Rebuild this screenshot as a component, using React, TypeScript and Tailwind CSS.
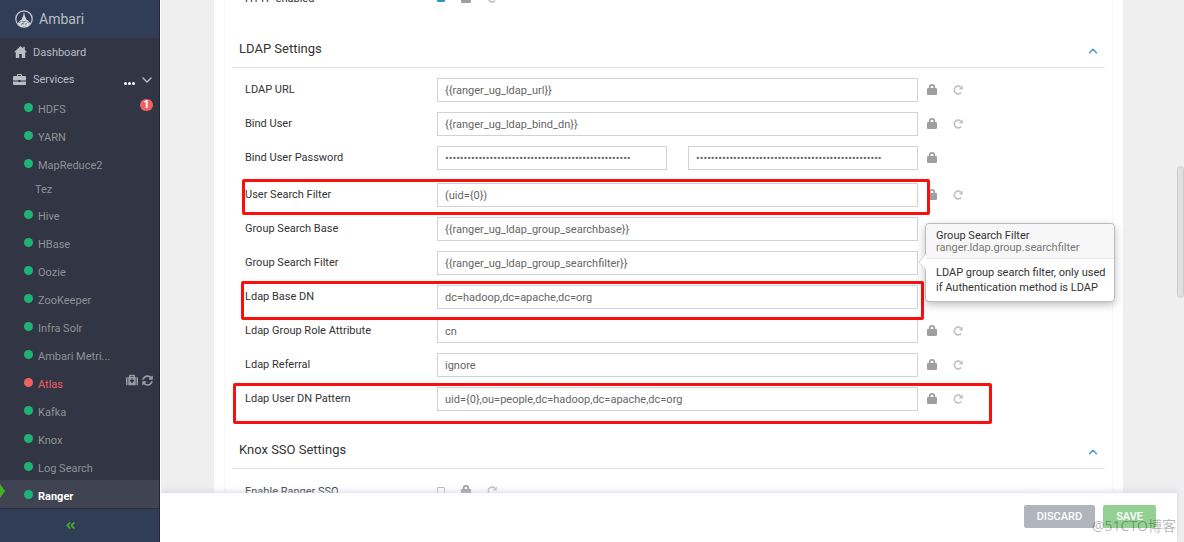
import { FaAngleDoubleLeft, FaMedkit, FaSyncAlt } from 'react-icons/fa';
import { ChevronDown, ChevronUp } from 'lucide-react';

type Status = 'ok' | 'down' | 'none';

interface Service {
  name: string;
  status: Status;
  alerts?: number;
  restart?: boolean;
  active?: boolean;
}

interface Property {
  id: string;
  label: string;
  value: string;
  secret?: boolean;
  mark?: string;
  changed?: boolean;
}

const SERVICES: Service[] = [
  { name: 'HDFS', status: 'ok', alerts: 1 },
  { name: 'YARN', status: 'ok' },
  { name: 'MapReduce2', status: 'ok' },
  { name: 'Tez', status: 'none' },
  { name: 'Hive', status: 'ok' },
  { name: 'HBase', status: 'ok' },
  { name: 'Oozie', status: 'ok' },
  { name: 'ZooKeeper', status: 'ok' },
  { name: 'Infra Solr', status: 'ok' },
  { name: 'Ambari Metri...', status: 'ok' },
  { name: 'Atlas', status: 'down', restart: true },
  { name: 'Kafka', status: 'ok' },
  { name: 'Knox', status: 'ok' },
  { name: 'Log Search', status: 'ok' },
  { name: 'Ranger', status: 'ok', active: true },
];

const SECRET = 'x'.repeat(50);

const PROPERTIES: Property[] = [
  { id: 'url', label: 'LDAP URL', value: '{{ranger_ug_ldap_url}}' },
  { id: 'bind-user', label: 'Bind User', value: '{{ranger_ug_ldap_bind_dn}}' },
  { id: 'bind-password', label: 'Bind User Password', value: SECRET, secret: true },
  {
    id: 'user-filter',
    label: 'User Search Filter',
    value: '(uid={0})',
    mark: '-left-[3px] right-[175px] h-9',
  },
  {
    id: 'group-base',
    label: 'Group Search Base',
    value: '{{ranger_ug_ldap_group_searchbase}}',
    changed: true,
  },
  { id: 'group-filter', label: 'Group Search Filter', value: '{{ranger_ug_ldap_group_searchfilter}}' },
  {
    id: 'base-dn',
    label: 'Ldap Base DN',
    value: 'dc=hadoop,dc=apache,dc=org',
    mark: '-left-1 right-[181px] h-[39px]',
  },
  { id: 'group-role', label: 'Ldap Group Role Attribute', value: 'cn' },
  { id: 'referral', label: 'Ldap Referral', value: 'ignore' },
  {
    id: 'dn-pattern',
    label: 'Ldap User DN Pattern',
    value: 'uid={0},ou=people,dc=hadoop,dc=apache,dc=org',
    mark: '-left-3 right-[113px] h-[41px]',
  },
];

function Logo() {
  return (
    <svg viewBox="0 0 18 18" className="size-[18px]" fill="none">
      <circle cx="9" cy="9" r="8.2" stroke="#c9ced6" strokeWidth="1.2" />
      <path
        d="M8.7 2.8h.6l.5 3.2.9 1.7.4 1.6 2.1 1.5 2.3 2.6-1.7 1.8-2.4 1.3H6.6l-2.4-1.3-1.7-1.8 2.3-2.6 2.1-1.5.4-1.6.9-1.7z"
        fill="#d3d7dd"
      />
      <path
        d="M4.2 13l1.6-1.6M6.6 14.8l.9-1.7 1.3.9M7.4 11.2l1.6.9 1.6-1M10.6 14.6l.8-1.5M12.4 11.6l1 1.2"
        stroke="#313d54"
        strokeWidth=".8"
      />
    </svg>
  );
}

function HomeIcon() {
  return (
    <svg viewBox="0 0 13 12" className="h-3 w-[13px]" fill="currentColor">
      <path d="M6.5 0L0 6.2h1.8V12h3.4V8h2.6v4h3.4V6.2H13L10.8 4V.8H9.2v1.7z" />
    </svg>
  );
}

function BriefcaseIcon() {
  return (
    <svg viewBox="0 0 13 12" className="h-3 w-[13px]" fill="currentColor">
      <path d="M4 2V1a1 1 0 011-1h3a1 1 0 011 1v1h3a1 1 0 011 1v3.6H7.6V6H5.4v.6H0V3a1 1 0 011-1zm1 0h3V1H5zM0 7.4h5.4V8h2.2v-.6H13V10a1 1 0 01-1 1H1a1 1 0 01-1-1z" />
    </svg>
  );
}

function LockIcon() {
  return (
    <svg viewBox="0 0 10 11" className="h-[11px] w-2.5" fill="currentColor">
      <path d="M1.8 4V3.2a3.2 3.2 0 016.4 0V4H9a1 1 0 011 1v5a1 1 0 01-1 1H1a1 1 0 01-1-1V5a1 1 0 011-1zm1.8 0h2.8V3.2a1.4 1.4 0 00-2.8 0z" />
    </svg>
  );
}

function RepeatIcon() {
  return (
    <svg viewBox="0 0 10 10" className="size-2.5" fill="none">
      <path d="M8.2 7.5A3.9 3.9 0 118 2.3" stroke="currentColor" strokeWidth="1.6" />
      <path d="M9.8.4v4.2H5.6z" fill="currentColor" />
    </svg>
  );
}

function PropertyActions({ override = true, changed = false }: { override?: boolean; changed?: boolean }) {
  return (
    <div className="flex items-center gap-4 pl-[9px]">
      <button type="button" aria-label="Final" className="pb-0.5 text-[#9f9f9f]">
        <LockIcon />
      </button>
      {override && (
        <button type="button" aria-label="Reset" className={changed ? 'text-[#3f9b6b]' : 'text-[#c2c2c2]'}>
          <RepeatIcon />
        </button>
      )}
    </div>
  );
}

function SectionHeader({ title }: { title: string }) {
  return (
    <div className="flex h-[37px] items-center justify-between border-b border-[#dddfe1] pr-[5px] pl-[7px]">
      <h2 className="text-[13px] text-[#333]">{title}</h2>
      <button type="button" aria-label={`Collapse ${title}`} className="pt-[3px] text-[#4a9cc9]">
        <ChevronUp size={14} strokeWidth={2.5} />
      </button>
    </div>
  );
}

function Popover() {
  return (
    <div
      role="tooltip"
      className="absolute -top-7 -right-2.5 z-20 w-[190px] rounded border border-[#bbb] bg-white shadow-[0_3px_8px_rgba(0,0,0,0.25)]"
    >
      <svg viewBox="0 0 8 16" className="absolute top-[30px] -left-2 h-4 w-2">
        <path d="M8 0L1 8l7 8" fill="#fff" stroke="#ccc" strokeWidth=".8" />
      </svg>
      <div className="rounded-t border-b border-[#e8e8e8] bg-[#f7f7f7] px-2.5 pt-1.5 pb-1 leading-3">
        <div className="text-[#333]">Group Search Filter</div>
        <div className="text-[#777]">ranger.ldap.group.searchfilter</div>
      </div>
      <p className="py-1.5 pr-1 pl-2.5 leading-[15px] text-[#333]">
        LDAP group search filter, only used if Authentication method is LDAP
      </p>
    </div>
  );
}

const FIELD =
  'h-6 w-full min-w-0 flex-1 border border-[#cfd3d8] bg-white px-[7px] text-[#666] outline-none focus:border-[#4a9cc9]';

function PropertyRow({ property }: { property: Property }) {
  const { id, label, value, secret, mark, changed } = property;
  return (
    <div className={`relative flex h-6 items-center ${secret ? 'mb-[13px]' : 'mb-2.5'}`}>
      <label htmlFor={id} className="w-48 shrink-0 pt-px text-[#333]">
        {label}
      </label>
      <div className="flex flex-1 gap-[21px]">
        <input id={id} type={secret ? 'password' : 'text'} defaultValue={value} className={FIELD} />
        {secret && (
          <input type="password" aria-label="Confirm password" defaultValue={value} className={FIELD} />
        )}
      </div>
      <div className="w-[187px] shrink-0">
        <PropertyActions override={!secret} changed={changed} />
      </div>
      {mark && (
        <span className={`pointer-events-none absolute -top-1 z-10 rounded-xs border-[3px] border-[#fb0f0c] ${mark}`} />
      )}
      {id === 'group-filter' && <Popover />}
    </div>
  );
}

function ToggleRow({ id, label, checked }: { id: string; label: string; checked?: boolean }) {
  return (
    <div className="flex h-6 items-center pl-[13px]">
      <label htmlFor={id} className="w-48 shrink-0 pt-0.5 text-[#333]">
        {label}
      </label>
      <input
        id={id}
        type="checkbox"
        defaultChecked={checked}
        className="mr-[7px] size-2 appearance-none rounded-[1px] border border-[#bbb] bg-white checked:border-[#2f95c8] checked:bg-[#2f95c8]"
      />
      <PropertyActions />
    </div>
  );
}

function ServiceItem({ service }: { service: Service }) {
  const { name, status, alerts, restart, active } = service;
  if (status === 'none') {
    return (
      <li className="flex h-[23px] items-center pt-1 pl-[35px] text-[#8f9297]">
        <a href={`#${name}`}>{name}</a>
      </li>
    );
  }
  const color = active ? 'font-bold text-white' : status === 'down' ? 'text-[#ef5c5f]' : 'text-[#8f9297]';
  return (
    <li className={`relative flex h-7 items-center pr-1.5 pl-6 ${active ? 'bg-[#404351]' : ''}`}>
      {active && (
        <svg viewBox="0 0 5 14" className="absolute top-1 left-0 h-3.5 w-[5px]" fill="#43b02a">
          <path d="M0 0l5 7-5 7z" />
        </svg>
      )}
      <span className={`size-[9px] rounded-full ${status === 'down' ? 'bg-[#ef6162]' : 'bg-[#1eb475]'}`} />
      <a href={`#${name}`} className={`flex-1 pt-1.5 pl-[5px] ${color}`}>
        {name}
      </a>
      {alerts && (
        <span className="mb-1 flex h-3 w-[13px] items-center justify-center rounded-full bg-[#ef6162] font-bold text-white">
          {alerts}
        </span>
      )}
      {restart && (
        <span className="mb-1 flex items-center gap-1 text-[#999ca3]">
          <FaMedkit size={12} />
          <FaSyncAlt size={11} />
        </span>
      )}
    </li>
  );
}

function Sidebar() {
  return (
    <nav className="flex w-40 shrink-0 flex-col border-r border-[#232634] bg-[#323544] text-[#b8bec4]">
      <div className="flex h-[38px] shrink-0 items-center gap-1.5 bg-[#313d54] pl-[15px] text-sm">
        <Logo />
        Ambari
      </div>
      <a href="#dashboard" className="flex h-7 shrink-0 items-center gap-1.5 pl-3.5">
        <HomeIcon />
        <span className="pt-0.5">Dashboard</span>
      </a>
      <div className="flex h-[27px] shrink-0 items-center pr-1 pl-[13px]">
        <a href="#services" className="flex flex-1 items-center gap-[7px]">
          <BriefcaseIcon />
          <span className="pt-0.5">Services</span>
        </a>
        <button type="button" aria-label="Service actions" className="mt-2 mr-1 flex gap-px">
          <i className="size-[3px] rounded-full bg-white" />
          <i className="size-[3px] rounded-full bg-white" />
          <i className="size-[3px] rounded-full bg-white" />
        </button>
        <button type="button" aria-label="Toggle services">
          <ChevronDown size={16} />
        </button>
      </div>
      <ul className="flex-1">
        {SERVICES.map((service) => (
          <ServiceItem key={service.name} service={service} />
        ))}
      </ul>
      <button
        type="button"
        aria-label="Collapse menu"
        className="flex h-[34px] shrink-0 items-center justify-center border-t border-[#2b2f3d] bg-[#313d54] pr-[18px] text-[#43b02a]"
      >
        <FaAngleDoubleLeft size={11} />
      </button>
    </nav>
  );
}

export default function App() {
  return (
    <div className="flex h-screen overflow-hidden bg-[#efefef] font-['Roboto',sans-serif] text-[11px]">
      <Sidebar />
      <main className="relative min-w-0 flex-1 overflow-hidden border-l border-white pr-[7px]">
        <div className="mr-[54px] ml-[53px] bg-white px-2.5">
          <div className="border-x border-[#f7f7f7] px-[7px]">
            {/* Tail of the section scrolled out of view */}
            <div className="-mt-3.5 mb-[21px]">
              <ToggleRow id="http-enabled" label="HTTP enabled" checked />
            </div>

            <SectionHeader title="LDAP Settings" />
            <div className="pt-2.5 pb-[11px] pl-[13px]">
              {PROPERTIES.map((property) => (
                <PropertyRow key={property.id} property={property} />
              ))}
            </div>

            <SectionHeader title="Knox SSO Settings" />
            <div className="pt-2.5 pb-20">
              <ToggleRow id="ranger-sso" label="Enable Ranger SSO" />
            </div>
          </div>
        </div>

        {/* Scrollbar thumb */}
        <div className="absolute top-[166px] right-0 z-10 h-[132px] w-[7px] rounded-full border border-[#ccc] bg-[#e0e0e0]" />

        <footer className="absolute right-[7px] bottom-0 left-0 z-20 flex h-[49px] items-start justify-end gap-2 bg-white pt-3 pr-[21px] shadow-[0_-2px_5px_rgba(200,204,225,0.6)]">
          <button type="button" className="h-[23px] rounded-xs bg-[#b0b5bd] px-[13px] pt-px font-medium text-white">
            DISCARD
          </button>
          <button type="button" className="h-[23px] rounded-xs bg-[#94d094] px-[13px] pt-px font-medium text-white">
            SAVE
          </button>
        </footer>
        <span className="pointer-events-none absolute right-2 bottom-1.5 z-30 font-['Open_Sans','Noto_Sans_CJK_SC',sans-serif] text-sm leading-5 text-black/30">
          @51CTO博客
        </span>
      </main>
    </div>
  );
}
